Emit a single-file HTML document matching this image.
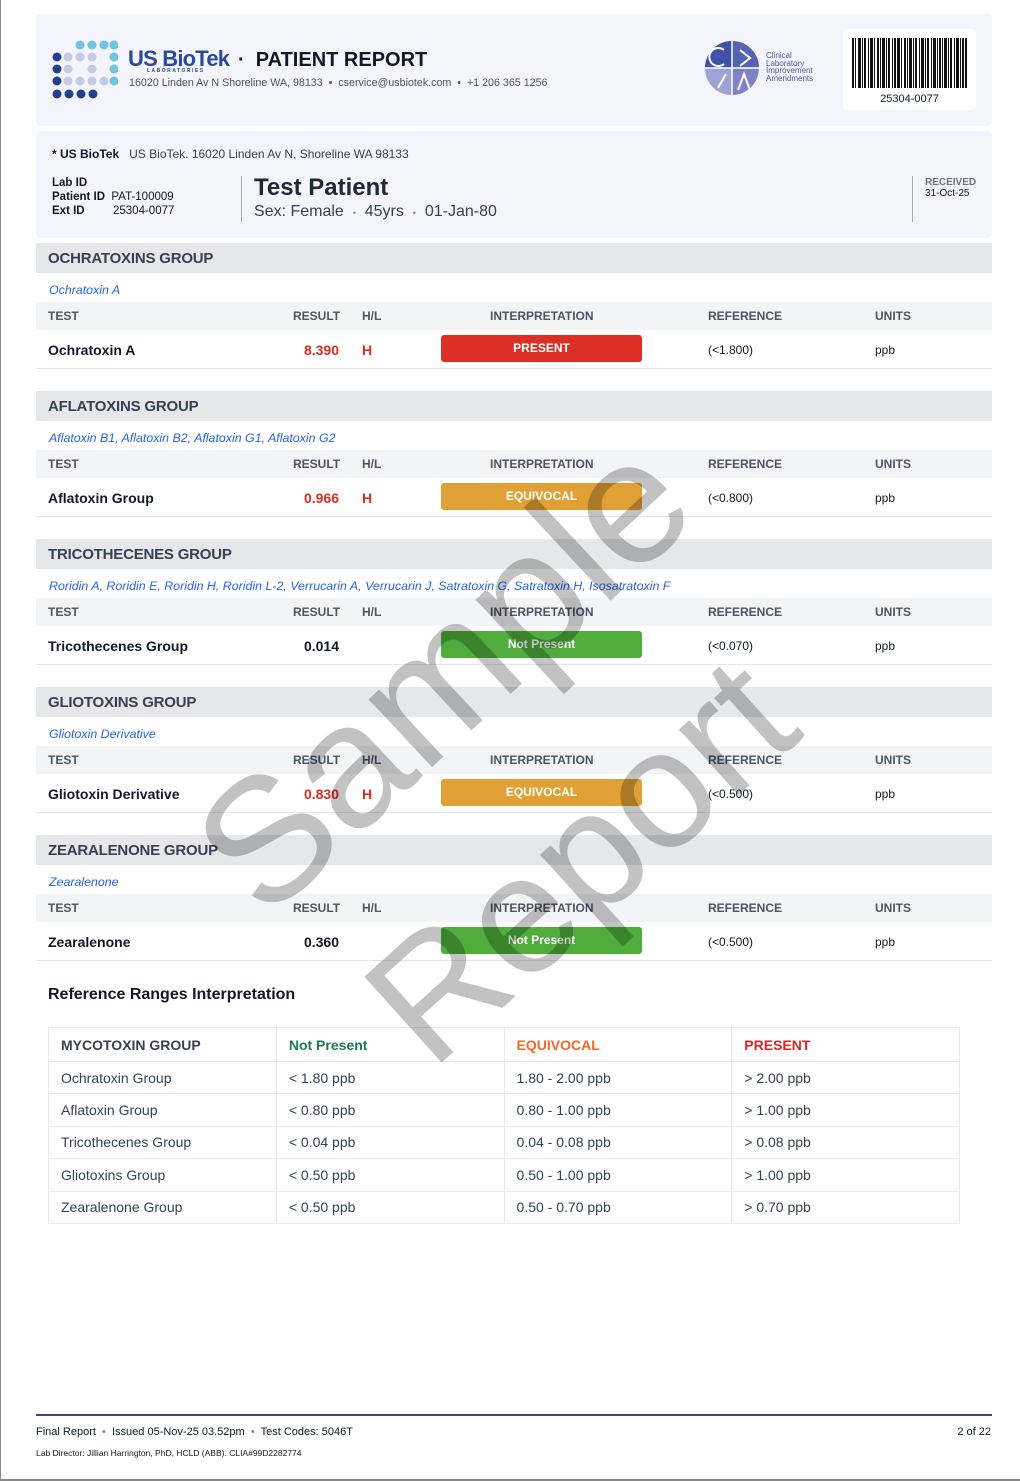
<!DOCTYPE html>
<html><head><meta charset="utf-8"><style>
*{margin:0;padding:0;box-sizing:border-box}
body{width:1020px;height:1481px;background:#fff;font-family:"Liberation Sans",sans-serif;color:#111827;position:relative;overflow:hidden}
.frame{position:absolute;left:0;top:0;width:1020px;height:1481px;border-left:1px solid #888;border-bottom:2px solid #888;pointer-events:none}
.card{position:absolute;left:36px;width:956px;background:#f4f4fd;border-radius:4px}
.abs{position:absolute;white-space:nowrap}
.grp{position:absolute;left:36px;width:956px}
.gh{height:30px;background:#e5e7eb;font-size:15px;font-weight:bold;color:#374151;padding:7px 12px;letter-spacing:-0.2px}
.sub{height:29px;font-size:12.4px;font-style:italic;color:#2563eb;padding:10px 13px 0}
.hr{height:28px;background:#f3f4f6;position:relative;font-size:12px;font-weight:bold;color:#4b5563}
.dr{height:39px;position:relative;border-bottom:1px solid #e5e7eb;font-size:14px}
.hr span,.dr span{position:absolute;top:7px}
.dr span{top:12px}
.badge{position:absolute;left:405px;top:5px;width:201px;height:27px;border-radius:3px;color:#fff;font-size:12px;font-weight:bold;text-align:center;line-height:27px}
.red{background:#dc3026}.org{background:#e0a035}.grn{background:#4fac3d}
.wm{position:absolute;font-size:180px;color:rgba(0,0,0,0.24);font-family:"Liberation Sans",sans-serif;white-space:nowrap;transform-origin:center;line-height:1}
table{border-collapse:collapse}
.rt td{border:1px solid #e8e8ee;height:32.4px;padding:0 12px;font-size:14px;color:#374151;width:228px}
</style></head><body>
<div class="card" style="top:14px;height:112px"></div>
<div class="card" style="top:131px;height:107px"></div>
<svg class="abs" style="left:52px;top:40px" width="66" height="62">
<g fill="#6fc4e0"><circle cx="28" cy="5" r="4.5"/><circle cx="40" cy="5" r="4.5"/><circle cx="52" cy="5" r="4.5"/><circle cx="62" cy="5" r="4.5"/><circle cx="62" cy="17" r="4.5"/><circle cx="62" cy="29" r="4.5"/><circle cx="62" cy="41" r="4.5"/></g>
<g fill="#c5cbe0"><circle cx="16" cy="17" r="4.5"/><circle cx="28" cy="17" r="4.5"/><circle cx="40" cy="17" r="4.5"/><circle cx="16" cy="29" r="4.5"/><circle cx="40" cy="29" r="4.5"/><circle cx="16" cy="41" r="4.5"/><circle cx="28" cy="41" r="4.5"/><circle cx="40" cy="41" r="4.5"/><circle cx="52" cy="41" r="4.5"/></g>
<g fill="#23408e"><circle cx="5" cy="17" r="4.5"/><circle cx="5" cy="29" r="4.5"/><circle cx="5" cy="41" r="4.5"/><circle cx="5" cy="54" r="4.5"/><circle cx="17" cy="54" r="4.5"/><circle cx="29" cy="54" r="4.5"/><circle cx="41" cy="54" r="4.5"/></g>
</svg>
<div class="abs" style="left:128px;top:46px;font-size:22px;font-weight:bold;color:#2b4a9a;letter-spacing:-0.8px">US BioTek</div>
<div class="abs" style="left:147px;top:68px;font-size:5px;color:#2b4a9a;letter-spacing:1.5px;font-weight:bold">LABORATORIES</div>
<div class="abs" style="left:238px;top:49px;font-size:20px;font-weight:bold;color:#111827">·&nbsp; PATIENT REPORT</div>
<div class="abs" style="left:129px;top:77px;font-size:10.7px;color:#4b5563">16020 Linden Av N Shoreline WA, 98133 &nbsp;•&nbsp; cservice@usbiotek.com &nbsp;•&nbsp; +1 206 365 1256</div>
<svg class="abs" style="left:704px;top:40px" width="58" height="56"><circle cx="28" cy="28" r="27" fill="#7e83c4"/><path d="M28 1A27 27 0 0 0 1 28H28Z" fill="#3f51a8"/><path d="M28 1A27 27 0 0 1 55 28H28Z" fill="#5563b0"/><path d="M1 28A27 27 0 0 0 28 55V28Z" fill="#9ea3d6"/><path d="M28 1V55M1 28H55" stroke="#fff" stroke-width="1.5"/><path d="M20 10a9 9 0 1 0 0 14M36 10l10 8-10 8M14 48l8-14M34 50l6-16 6 16" stroke="#fff" stroke-width="2" fill="none"/></svg>
<div class="abs" style="left:766px;top:52px;font-size:8px;line-height:7.5px;color:#4b5aa8">Clinical<br>Laboratory<br>Improvement<br>Amendments</div>
<div class="abs" style="left:843px;top:29px;width:133px;height:81px;background:#fff;border-radius:4px"></div>
<svg class="abs" style="left:852px;top:38px" width="115" height="50"><g fill="#111">
<rect x="0" y="0" width="2" height="50"/><rect x="3" y="0" width="1" height="50"/><rect x="6" y="0" width="3" height="50"/><rect x="10" y="0" width="1" height="50"/><rect x="12" y="0" width="2" height="50"/><rect x="16" y="0" width="1" height="50"/><rect x="18" y="0" width="3" height="50"/><rect x="22" y="0" width="1" height="50"/><rect x="25" y="0" width="2" height="50"/><rect x="28" y="0" width="1" height="50"/><rect x="30" y="0" width="3" height="50"/><rect x="34" y="0" width="1" height="50"/><rect x="36" y="0" width="2" height="50"/><rect x="40" y="0" width="1" height="50"/><rect x="42" y="0" width="2" height="50"/><rect x="45" y="0" width="3" height="50"/><rect x="49" y="0" width="1" height="50"/><rect x="52" y="0" width="2" height="50"/><rect x="55" y="0" width="1" height="50"/><rect x="57" y="0" width="3" height="50"/><rect x="61" y="0" width="1" height="50"/><rect x="63" y="0" width="2" height="50"/><rect x="67" y="0" width="1" height="50"/><rect x="69" y="0" width="3" height="50"/><rect x="73" y="0" width="1" height="50"/><rect x="75" y="0" width="2" height="50"/><rect x="79" y="0" width="1" height="50"/><rect x="81" y="0" width="3" height="50"/><rect x="85" y="0" width="1" height="50"/><rect x="87" y="0" width="2" height="50"/><rect x="90" y="0" width="1" height="50"/><rect x="92" y="0" width="3" height="50"/><rect x="96" y="0" width="1" height="50"/><rect x="98" y="0" width="2" height="50"/><rect x="102" y="0" width="1" height="50"/><rect x="104" y="0" width="3" height="50"/><rect x="108" y="0" width="1" height="50"/><rect x="110" y="0" width="2" height="50"/><rect x="113" y="0" width="2" height="50"/></g></svg>
<div class="abs" style="left:843px;top:93px;width:133px;text-align:center;font-size:11px">25304-0077</div>
<div class="abs" style="left:52px;top:147px;font-size:12px"><b>* US BioTek</b> &nbsp;&nbsp;<span style="color:#374151">US BioTek. 16020 Linden Av N, Shoreline WA 98133</span></div>
<div class="abs" style="left:52px;top:176px;font-size:11.5px;line-height:14px"><b>Lab ID</b><br><b>Patient ID</b>&nbsp; PAT-100009<br><b>Ext ID</b> <span style="position:absolute;left:61px">25304-0077</span></div>
<div class="abs" style="left:241px;top:176px;width:1px;height:46px;background:#aaa"></div>
<div class="abs" style="left:254px;top:174px;font-size:24px;font-weight:bold;color:#1f2937">Test Patient</div>
<div class="abs" style="left:254px;top:203px;font-size:16px;color:#374151">Sex: Female &nbsp;<span style="font-size:9px;color:#888">•</span>&nbsp; 45yrs &nbsp;<span style="font-size:9px;color:#888">•</span>&nbsp; 01-Jan-80</div>
<div class="abs" style="left:912px;top:176px;width:1px;height:46px;background:#aaa"></div>
<div class="abs" style="left:925px;top:177px;font-size:10px;line-height:11px"><b style="color:#6b7280">RECEIVED</b><br>31-Oct-25</div>

<div class="grp" style="top:243px"><div class="gh">OCHRATOXINS GROUP</div><div class="sub">Ochratoxin A</div>
<div class="hr"><span style="left:12px">TEST</span><span style="left:257px">RESULT</span><span style="left:326px">H/L</span><span style="left:454px">INTERPRETATION</span><span style="left:672px">REFERENCE</span><span style="left:839px">UNITS</span></div>
<div class="dr"><span style="left:12px;font-weight:bold">Ochratoxin A</span><span style="right:653px;color:#d92d20;font-weight:bold">8.390</span><span style="left:326px;color:#d92d20;font-weight:bold">H</span><div class="badge red">PRESENT</div><span style="left:672px;font-size:12px;top:13px">(&lt;1.800)</span><span style="left:839px;font-size:12px;top:13px">ppb</span></div></div>

<div class="grp" style="top:391px"><div class="gh">AFLATOXINS GROUP</div><div class="sub">Aflatoxin B1, Aflatoxin B2, Aflatoxin G1, Aflatoxin G2</div>
<div class="hr"><span style="left:12px">TEST</span><span style="left:257px">RESULT</span><span style="left:326px">H/L</span><span style="left:454px">INTERPRETATION</span><span style="left:672px">REFERENCE</span><span style="left:839px">UNITS</span></div>
<div class="dr"><span style="left:12px;font-weight:bold">Aflatoxin Group</span><span style="right:653px;color:#d92d20;font-weight:bold">0.966</span><span style="left:326px;color:#d92d20;font-weight:bold">H</span><div class="badge org">EQUIVOCAL</div><span style="left:672px;font-size:12px;top:13px">(&lt;0.800)</span><span style="left:839px;font-size:12px;top:13px">ppb</span></div></div>

<div class="grp" style="top:539px"><div class="gh">TRICOTHECENES GROUP</div><div class="sub">Roridin A, Roridin E, Roridin H, Roridin L-2, Verrucarin A, Verrucarin J, Satratoxin G, Satratoxin H, Isosatratoxin F</div>
<div class="hr"><span style="left:12px">TEST</span><span style="left:257px">RESULT</span><span style="left:326px">H/L</span><span style="left:454px">INTERPRETATION</span><span style="left:672px">REFERENCE</span><span style="left:839px">UNITS</span></div>
<div class="dr"><span style="left:12px;font-weight:bold">Tricothecenes Group</span><span style="right:653px;font-weight:bold">0.014</span><div class="badge grn">Not Present</div><span style="left:672px;font-size:12px;top:13px">(&lt;0.070)</span><span style="left:839px;font-size:12px;top:13px">ppb</span></div></div>

<div class="grp" style="top:687px"><div class="gh">GLIOTOXINS GROUP</div><div class="sub">Gliotoxin Derivative</div>
<div class="hr"><span style="left:12px">TEST</span><span style="left:257px">RESULT</span><span style="left:326px">H/L</span><span style="left:454px">INTERPRETATION</span><span style="left:672px">REFERENCE</span><span style="left:839px">UNITS</span></div>
<div class="dr"><span style="left:12px;font-weight:bold">Gliotoxin Derivative</span><span style="right:653px;color:#d92d20;font-weight:bold">0.830</span><span style="left:326px;color:#d92d20;font-weight:bold">H</span><div class="badge org">EQUIVOCAL</div><span style="left:672px;font-size:12px;top:13px">(&lt;0.500)</span><span style="left:839px;font-size:12px;top:13px">ppb</span></div></div>

<div class="grp" style="top:835px"><div class="gh">ZEARALENONE GROUP</div><div class="sub">Zearalenone</div>
<div class="hr"><span style="left:12px">TEST</span><span style="left:257px">RESULT</span><span style="left:326px">H/L</span><span style="left:454px">INTERPRETATION</span><span style="left:672px">REFERENCE</span><span style="left:839px">UNITS</span></div>
<div class="dr"><span style="left:12px;font-weight:bold">Zearalenone</span><span style="right:653px;font-weight:bold">0.360</span><div class="badge grn">Not Present</div><span style="left:672px;font-size:12px;top:13px">(&lt;0.500)</span><span style="left:839px;font-size:12px;top:13px">ppb</span></div></div>

<div class="abs" style="left:48px;top:986px;font-size:16px;font-weight:bold;color:#111827">Reference Ranges Interpretation</div>
<table class="rt abs" style="left:48px;top:1027px;width:912px">
<tr><td style="color:#374151;font-weight:bold;height:34px">MYCOTOXIN GROUP</td><td style="color:#1f7a4a;font-weight:bold">Not Present</td><td style="color:#ef6a2a;font-weight:bold">EQUIVOCAL</td><td style="color:#dc2626;font-weight:bold">PRESENT</td></tr>
<tr><td>Ochratoxin Group</td><td>&lt; 1.80 ppb</td><td>1.80 - 2.00 ppb</td><td>&gt; 2.00 ppb</td></tr>
<tr><td>Aflatoxin Group</td><td>&lt; 0.80 ppb</td><td>0.80 - 1.00 ppb</td><td>&gt; 1.00 ppb</td></tr>
<tr><td>Tricothecenes Group</td><td>&lt; 0.04 ppb</td><td>0.04 - 0.08 ppb</td><td>&gt; 0.08 ppb</td></tr>
<tr><td>Gliotoxins Group</td><td>&lt; 0.50 ppb</td><td>0.50 - 1.00 ppb</td><td>&gt; 1.00 ppb</td></tr>
<tr><td>Zearalenone Group</td><td>&lt; 0.50 ppb</td><td>0.50 - 0.70 ppb</td><td>&gt; 0.70 ppb</td></tr>
</table>

<div class="wm" style="left:443px;top:675px;font-size:176px;transform:translate(-50%,-50%) rotate(-43deg)">Sample</div>
<div class="wm" style="left:580px;top:860px;font-size:168px;transform:translate(-50%,-50%) rotate(-42deg)">Report</div>

<div class="abs" style="left:36px;top:1414px;width:956px;height:2px;background:#4c3a93"></div>
<div class="abs" style="left:36px;top:1426px;font-size:11px">Final Report &nbsp;<span style="color:#888">•</span>&nbsp; Issued 05-Nov-25 03.52pm &nbsp;<span style="color:#888">•</span>&nbsp; Test Codes: 5046T</div>
<div class="abs" style="right:29px;top:1426px;font-size:11px">2 of 22</div>
<div class="abs" style="left:36px;top:1448px;font-size:8.5px">Lab Director: Jillian Harrington, PhD, HCLD (ABB). CLIA#99D2282774</div>
<div class="frame"></div>
</body></html>
